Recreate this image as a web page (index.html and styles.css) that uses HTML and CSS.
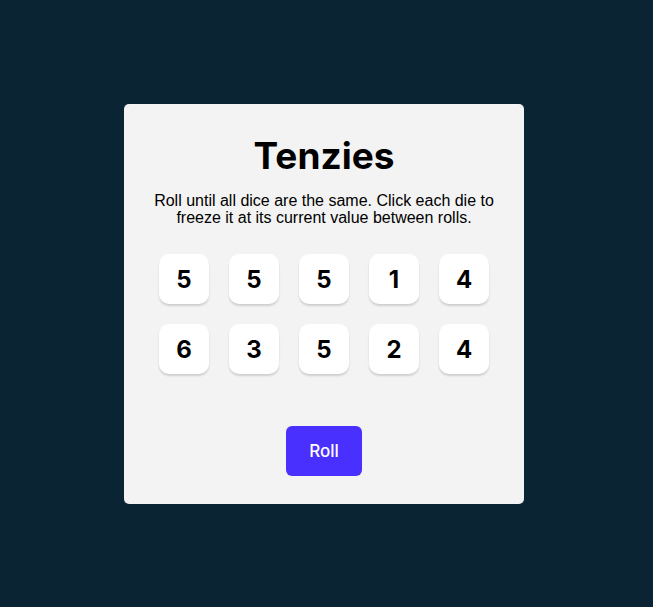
FILE: index.html
```html
<!DOCTYPE html>
<html lang="en">
<head>
<meta charset="utf-8">
<title>Tenzies</title>
<link rel="stylesheet" href="styles.css">
</head>
<body>
<main class="card">
  <h1 class="title">Tenzies</h1>
  <p class="instructions">Roll until all dice are the same. Click each die to freeze it at its current value between rolls.</p>
  <div class="dice">
    <button class="die">5</button>
    <button class="die">5</button>
    <button class="die">5</button>
    <button class="die">1</button>
    <button class="die">4</button>
    <button class="die">6</button>
    <button class="die">3</button>
    <button class="die">5</button>
    <button class="die">2</button>
    <button class="die">4</button>
  </div>
  <button class="roll">Roll</button>
</main>
</body>
</html>
```
FILE: styles.css
```css
html, body {
  margin: 0;
  background: #0B2434;
}
body {
  padding: 104px 0 0 124px;
  font-family: "Inter", "Liberation Sans", sans-serif;
}
.card {
  box-sizing: border-box;
  width: 400px;
  height: 400px;
  background: #F3F3F3;
  border-radius: 5px;
  display: flex;
  flex-direction: column;
  align-items: center;
  padding-top: 31px;
}
.title {
  margin: 0;
  font-size: 37px;
  line-height: 42px;
  font-weight: 700;
  letter-spacing: 0;
  color: #000;
}
.instructions {
  margin: 15px 0 0;
  width: 360px;
  text-align: center;
  font-family: "Liberation Sans", Arial, sans-serif;
  font-size: 16px;
  line-height: 17px;
  color: #000;
}
.dice {
  margin-top: 28px;
  display: grid;
  grid-template-columns: repeat(5, 50px);
  grid-auto-rows: 50px;
  gap: 20px;
}
.die {
  border: none;
  padding: 0;
  background: #FFFFFF;
  border-radius: 10px;
  box-shadow: 0 2px 2px rgba(0, 0, 0, 0.15);
  font-family: "Inter", sans-serif;
  font-size: 24px;
  font-weight: 700;
  color: #000;
}
.roll {
  margin-top: 52px;
  width: 76px;
  height: 50px;
  border: none;
  border-radius: 6px;
  background: #4A30FF;
  color: #FFFFFF;
  font-family: "Inter", sans-serif;
  font-size: 17px;
  font-weight: 500;
}
```
